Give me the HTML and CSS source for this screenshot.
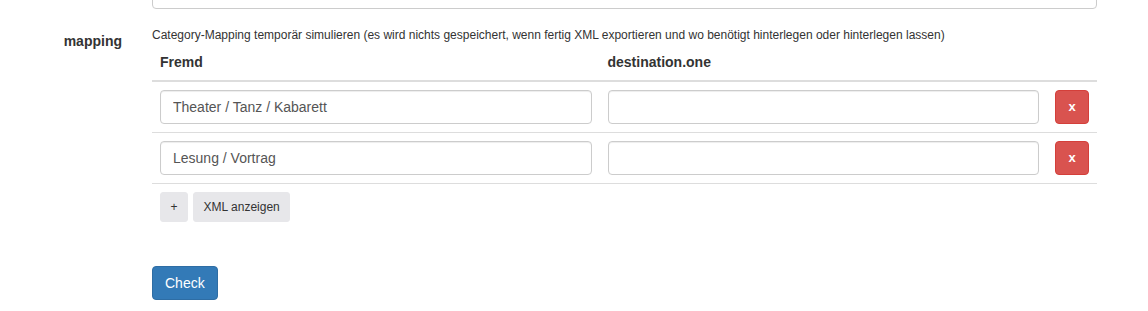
FILE: index.html
```html
<!DOCTYPE html>
<html lang="de">
<head>
    <meta charset="UTF-8">
    <meta name="viewport" content="width=device-width, initial-scale=1.0">
    <title>Mapping</title>
    <link rel="stylesheet" href="styles.css">
</head>
<body>
    <div class="form">
        <div class="form-group first">
            <div class="label"></div>
            <div class="field">
                <input type="text" class="form-control">
            </div>
        </div>

        <div class="form-group">
            <label class="label">mapping</label>
            <div class="field">
                <p class="help">Category-Mapping temporär simulieren (es wird nichts gespeichert, wenn fertig XML exportieren und wo benötigt hinterlegen oder hinterlegen lassen)</p>
                <table class="map-table">
                    <thead>
                        <tr>
                            <th>Fremd</th>
                            <th>destination.one</th>
                            <th class="col-del"></th>
                        </tr>
                    </thead>
                    <tbody>
                        <tr>
                            <td><input type="text" class="form-control" value="Theater / Tanz / Kabarett"></td>
                            <td><input type="text" class="form-control"></td>
                            <td><button class="btn btn-danger">x</button></td>
                        </tr>
                        <tr>
                            <td><input type="text" class="form-control" value="Lesung / Vortrag"></td>
                            <td><input type="text" class="form-control"></td>
                            <td><button class="btn btn-danger">x</button></td>
                        </tr>
                    </tbody>
                    <tfoot>
                        <tr>
                            <td colspan="3">
                                <div class="actions">
                                    <button class="btn btn-sm">+</button>
                                    <button class="btn btn-sm">XML anzeigen</button>
                                </div>
                            </td>
                        </tr>
                    </tfoot>
                </table>
            </div>
        </div>

        <div class="form-group">
            <div class="label"></div>
            <div class="field">
                <button class="btn btn-primary">Check</button>
            </div>
        </div>
    </div>
</body>
</html>
```

FILE: styles.css
```css
body {
    font-family: "Liberation Sans", Arial, sans-serif;
    font-size: 14px;
    line-height: 20px;
    color: #333;
    background-color: #fff;
    margin: 0;
}

.form {
    padding-right: 51px;
}

.form-group {
    display: grid;
    grid-template-columns: 122px 1fr;
    column-gap: 30px;
    margin-bottom: 14px;
}

.form-group.first {
    margin-top: -25px;
}

.label {
    text-align: right;
    font-weight: bold;
    padding-top: 8px;
}

.form-control {
    display: block;
    width: 100%;
    height: 34px;
    box-sizing: border-box;
    padding: 6px 12px;
    font-family: inherit;
    font-size: 14px;
    color: #555;
    background: #fff;
    border: 1px solid #ccc;
    border-radius: 4px;
    box-shadow: inset 0 1px 1px rgba(0, 0, 0, 0.075);
}

.help {
    font-size: 12px;
    line-height: 17px;
    margin: 4px 0 0;
    color: #333;
}

.map-table {
    width: 100%;
    border-collapse: collapse;
    margin-bottom: 22px;
}

.map-table th {
    text-align: left;
    padding: 8px;
    border-bottom: 2px solid #ddd;
}

.map-table td {
    padding: 8px;
    border-top: 1px solid #ddd;
    vertical-align: top;
}

.map-table .col-del {
    width: 34px;
}

.actions {
    display: flex;
    gap: 5px;
}

.btn {
    font-family: inherit;
    font-size: 14px;
    line-height: 20px;
    padding: 6px 12px;
    border: 1px solid transparent;
    border-radius: 4px;
    cursor: pointer;
}

.btn-sm {
    font-size: 12px;
    line-height: 18px;
    padding: 5px 9.5px;
    color: #333;
    background-color: #e7e7ea;
    border-color: #e7e7ea;
    border-radius: 3px;
}

.btn-danger {
    width: 34px;
    height: 34px;
    padding: 0;
    font-weight: bold;
    font-size: 13px;
    color: #fff;
    background-color: #d9534f;
    border-color: #d43f3a;
}

.btn-primary {
    color: #fff;
    background-color: #337ab7;
    border-color: #2e6da4;
}
```
